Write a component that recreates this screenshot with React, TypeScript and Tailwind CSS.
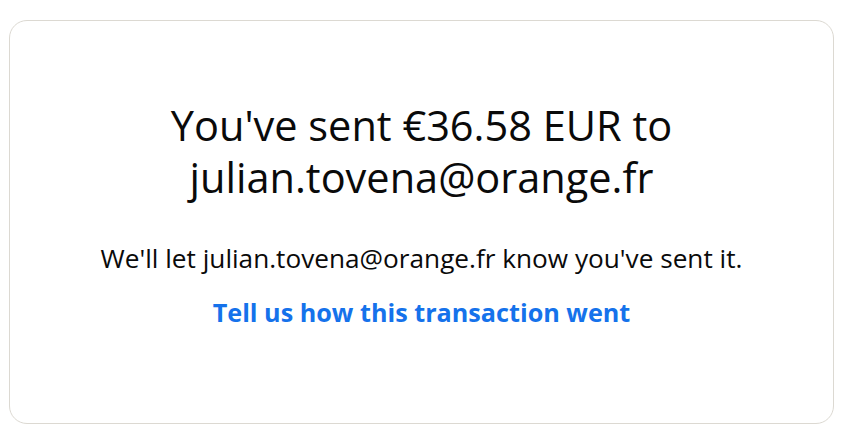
export default function App() {
  return (
    <div className="w-[857px] h-[434px] bg-white pt-[20px] pl-[9px]" style={{ fontFamily: '"Open Sans", Lato, sans-serif' }}>
      <div className="w-[825px] h-[404px] rounded-[18px] border border-[#dcd9d2] bg-white flex flex-col items-center pt-[78px]">
        <h1 className="text-[41.5px] leading-[52px] text-[#0a0a0a] text-center font-normal">
          You've sent €36.58 EUR to
          <br />
          julian.tovena@orange.fr
        </h1>
        <p className="mt-[39px] text-[26.2px] leading-[32px] text-[#0a0a0a]">
          We'll let julian.tovena@orange.fr know you've sent it.
        </p>
        <a href="#" className="mt-[22px] text-[25.2px] leading-[32px] font-bold text-[#1572eb]">
          Tell us how this transaction went
        </a>
      </div>
    </div>
  );
}
